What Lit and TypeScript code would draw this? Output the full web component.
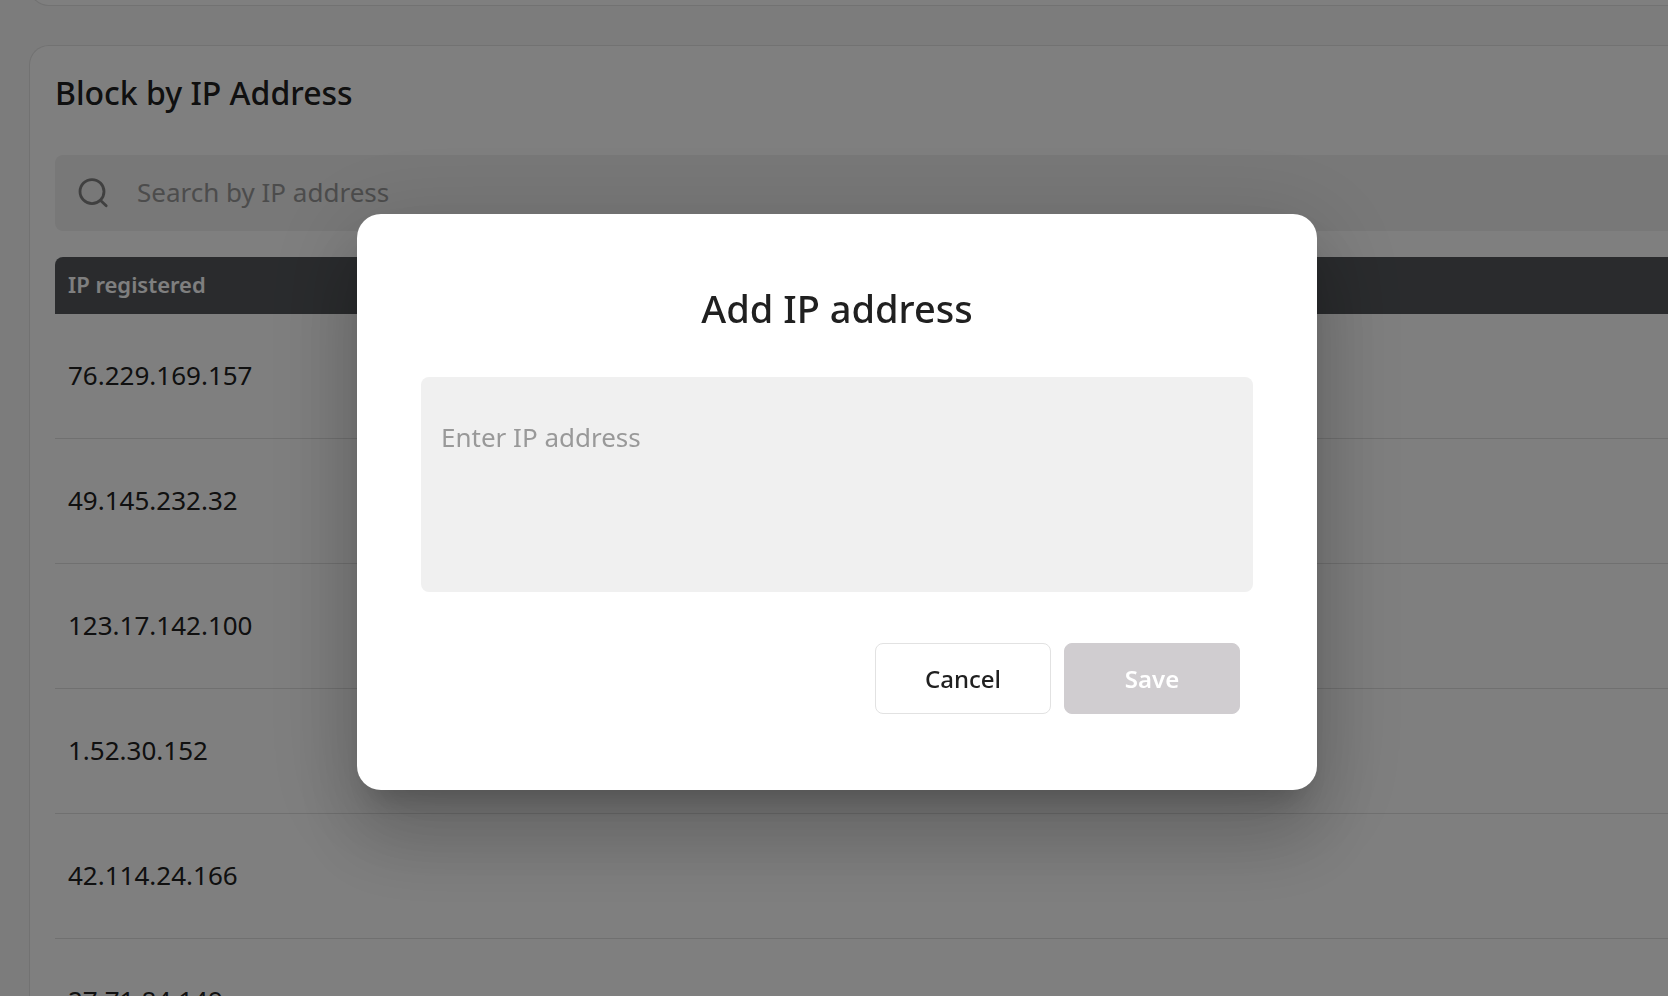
import { LitElement, html, css } from "lit";
import { customElement, state } from "lit/decorators.js";

@customElement("ip-block-card")
class IpBlockCard extends LitElement {
  static styles = css`
    :host {
      display: block;
      background: #fff;
      border: 1px solid #e4e4e4;
      border-right: 0;
      border-radius: 20px 0 0 0;
      padding: 23px 0 24px 25px;
    }
    .title {
      margin: 0 0 38px;
      font-size: 32px;
      line-height: 48px;
      font-weight: 500;
      color: #202020;
    }
    .search {
      display: flex;
      align-items: center;
      gap: 28px;
      height: 76px;
      padding-left: 22px;
      margin-bottom: 26px;
      background: #f0f0f0;
      border-radius: 8px 0 0 8px;
    }
    .search-icon {
      flex: none;
      width: 32px;
      height: 32px;
    }
    .search-input {
      flex: 1;
      min-width: 0;
      padding: 0 0 2px;
      border: 0;
      outline: 0;
      background: none;
      font: inherit;
      font-size: 26px;
      color: #202020;
    }
    .search-input::placeholder {
      color: #999;
      opacity: 1;
    }
    .table {
      width: 100%;
      border-collapse: separate;
      border-spacing: 0;
    }
    .head {
      box-sizing: border-box;
      height: 57px;
      padding: 0 13px 4px;
      background: #54575b;
      border-radius: 8px 0 0 0;
      font-size: 22px;
      line-height: 32px;
      font-weight: 600;
      text-align: left;
      color: #fff;
    }
    .cell {
      box-sizing: border-box;
      height: 125px;
      padding: 0 13px 2px;
      border-bottom: 1px solid #e0e0e0;
      font-size: 26px;
      line-height: 36px;
      color: #202020;
    }
  `;

  private addresses = [
    "76.229.169.157",
    "49.145.232.32",
    "123.17.142.100",
    "1.52.30.152",
    "42.114.24.166",
    "27.71.84.149",
  ];

  render() {
    return html`
      <h2 class="title">Block by IP Address</h2>
      <label class="search">
        <svg class="search-icon" viewBox="0 0 32 32" fill="none" stroke="#808080" stroke-width="2.8" stroke-linecap="round" aria-hidden="true">
          <circle cx="15" cy="14.6" r="12" />
          <path d="M23.6 23.4 29.2 28.8" />
        </svg>
        <input class="search-input" type="text" placeholder="Search by IP address" aria-label="Search by IP address" />
      </label>
      <table class="table">
        <thead>
          <tr><th class="head" scope="col">IP registered</th></tr>
        </thead>
        <tbody>
          ${this.addresses.map((ip) => html`<tr><td class="cell">${ip}</td></tr>`)}
        </tbody>
      </table>
    `;
  }
}

@customElement("add-ip-dialog")
class AddIpDialog extends LitElement {
  static styles = css`
    :host {
      position: fixed;
      inset: 0;
      box-sizing: border-box;
      display: flex;
      align-items: center;
      justify-content: center;
      padding: 8px 0 0 6px;
      background: rgba(0, 0, 0, 0.5);
    }
    .dialog {
      position: static;
      box-sizing: border-box;
      width: 960px;
      max-width: 100%;
      margin: 0;
      padding: 64px 64px 76px;
      border: 0;
      border-radius: 24px;
      background: #fff;
      color: #202020;
      box-shadow:
        0 22px 30px -14px rgba(0, 0, 0, 0.2),
        0 48px 76px 6px rgba(0, 0, 0, 0.14),
        0 18px 92px 16px rgba(0, 0, 0, 0.12);
    }
    .title {
      margin: 0 0 39px;
      font-size: 38px;
      line-height: 60px;
      font-weight: 500;
      text-align: center;
    }
    .field {
      display: block;
      box-sizing: border-box;
      width: 100%;
      height: 215px;
      margin: 0 0 51px;
      padding: 42px 20px;
      border: 0;
      outline: 0;
      border-radius: 8px;
      resize: none;
      background: #f0f0f0;
      font: inherit;
      font-size: 26px;
      line-height: 36px;
      color: #202020;
    }
    .field::placeholder {
      color: #999;
      opacity: 1;
    }
    .actions {
      display: flex;
      justify-content: flex-end;
      gap: 13px;
      padding-right: 13px;
    }
    .button {
      width: 176px;
      height: 71px;
      padding: 0;
      border: 1px solid #e2e2e2;
      border-radius: 8px;
      background: #fff;
      font: inherit;
      font-size: 24px;
      font-weight: 500;
      color: #202020;
    }
    .button:disabled {
      border-color: #d0cdd0;
      background: #d0cdd0;
      font-weight: 600;
      color: #fff;
    }
  `;

  @state() private value = "";

  private onInput(e: Event) {
    this.value = (e.target as HTMLTextAreaElement).value;
  }

  render() {
    return html`
      <dialog class="dialog" open aria-labelledby="title">
        <h1 class="title" id="title">Add IP address</h1>
        <textarea class="field" placeholder="Enter IP address" aria-label="IP address" @input=${this.onInput}></textarea>
        <div class="actions">
          <button class="button" type="button">Cancel</button>
          <button class="button" type="button" ?disabled=${!this.value}>Save</button>
        </div>
      </dialog>
    `;
  }
}

@customElement("app-root")
class AppRoot extends LitElement {
  static styles = css`
    :host {
      display: block;
      height: 100vh;
      overflow: hidden;
      background: #f8f8f8;
      font-family: "Noto Sans", sans-serif;
    }
    .page {
      display: flex;
      flex-direction: column;
      gap: 39px;
      margin-top: -34px;
      padding-left: 29px;
    }
    .previous {
      box-sizing: border-box;
      height: 40px;
      background: #fff;
      border: solid #e4e4e4;
      border-width: 0 0 1px 1px;
      border-radius: 0 0 0 20px;
    }
  `;

  render() {
    return html`
      <main class="page">
        <section class="previous"></section>
        <ip-block-card></ip-block-card>
      </main>
      <add-ip-dialog></add-ip-dialog>
    `;
  }
}
